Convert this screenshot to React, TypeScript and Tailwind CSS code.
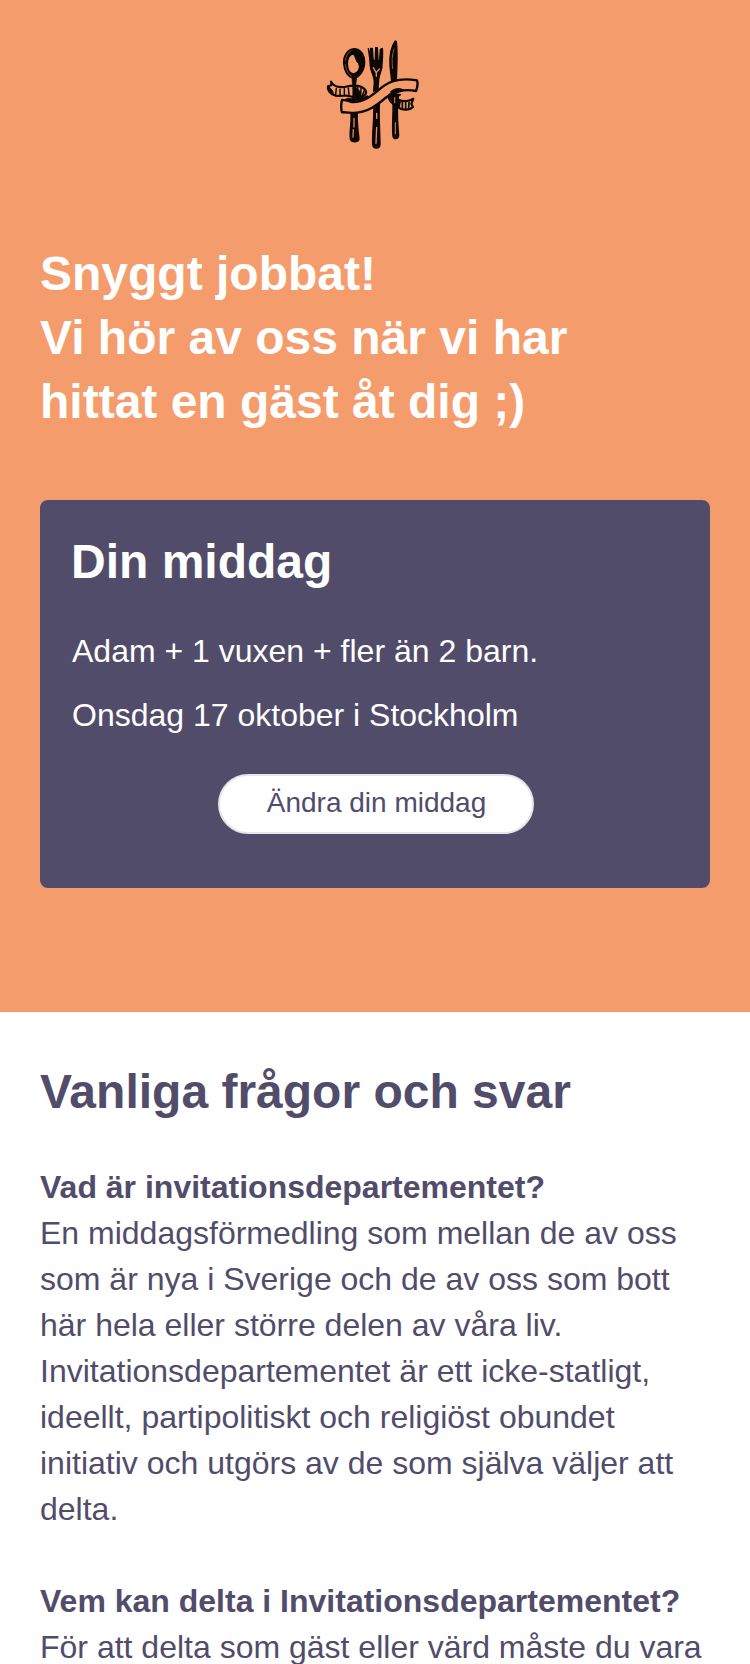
function Logo() {
  return (
    <svg
      className="ml-[270px] block h-[130px] w-[125px] blur-[0.45px]"
      viewBox="0 0 375 390"
      fill="none"
      stroke="#0d0805"
      strokeLinecap="round"
      strokeLinejoin="round"
      role="img"
    >
      {/* ribbon tails behind the cutlery */}
      <path
        d="M63 155 C70 170 84 173 104 171 C128 165 154 164 166 180 C173 190 163 200 148 204 M63 155 C65 164 67 168 54 168 C51 180 60 193 77 197 C95 200 109 194 121 199 C135 203 147 214 158 202"
        strokeWidth="6.5"
      />
      <path d="M79 175 L77 193 M90 178 V195 M103 176 V193 M115 174 L117 193 M143 171 V198 M153 175 L152 199 M162 183 L156 200" strokeWidth="4.5" />
      <path d="M55 169 C66 178 71 185 69 192 L60 184 Z M137 173 C149 178 155 190 148 204 L139 205 Z" fill="#0d0805" strokeWidth="3" />
      <path
        d="M236 190 C232 208 246 223 264 231 C274 241 298 242 309 231 L304 222 L310 206 C299 214 280 216 267 210"
        strokeWidth="6.5"
      />
      <path d="M237 193 C247 191 263 191 273 194 C260 199 261 207 271 215 L268 231 C251 225 240 211 237 193 Z" fill="#0d0805" strokeWidth="3" />
      <path d="M277 217 V234 M287 218 V235 M297 217 L296 234" strokeWidth="5" />
      {/* spoon */}
      <path
        d="M132 56 C112 58 99 78 101 101 C103 124 114 140 129 145 C149 143 164 121 164 97 C164 73 151 56 132 56 Z M132 71 C118 74 112 86 112 102 C113 118 120 131 131 132 C143 129 151 115 151 97 C150 79 144 71 132 71 Z"
        fill="#0d0805"
        fillRule="evenodd"
        strokeWidth="4"
      />
      <path d="M106 91 C108 78 114 68 123 62 M106 103 C109 123 117 134 125 139" stroke="#b87950" strokeWidth="1.8" />
      <path d="M126 70 C139 77 134 91 146 101 C149 111 150 119 145 125 C158 104 155 76 143 69 Z" fill="#0d0805" strokeWidth="3" />
      <path d="M126 143 L140 142 L138 158 C135 177 140 190 146 210 L125 214 C131 193 128 174 126 143 Z" fill="#0d0805" strokeWidth="2" />
      <path d="M123 252 L142 248 C140 277 145 304 147 327 C146 337 125 339 121 327 C118 304 125 278 123 252 Z" fill="#0d0805" strokeWidth="4" />
      <path d="M132 265 V291 M130 299 L129 321" stroke="#d9885b" strokeWidth="4" />
      {/* fork */}
      <path
        d="M175 56 C178 74 180 89 181 107 C181 126 194 137 193 157 L191 184 L204 178 L206 148 C207 129 218 122 216 104 C217 88 219 72 217 55 L211 59 L209 89 C207 96 204 95 204 88 L202 53 L197 53 L196 88 C193 96 190 94 189 84 L187 55 L182 55 L181 79 Z"
        fill="#0d0805"
        strokeWidth="4"
      />
      <path d="M198 127 L190 113 M199 128 L208 117 M199 128 V139" stroke="#e38e5f" strokeWidth="4" />
      <path d="M191 222 L209 212 C205 250 210 306 210 343 C209 358 190 358 188 344 C186 306 194 261 191 222 Z" fill="#0d0805" strokeWidth="4" />
      <path d="M200 250 V265 M200 292 L198 340" stroke="#e38e5f" strokeWidth="4" />
      {/* knife */}
      <path d="M256 33 C244 49 238 77 240 108 L245 153 L259 149 C261 111 263 68 259 35 Z" fill="#0d0805" strokeWidth="4" />
      <path d="M252 57 C246 75 245 95 248 116" stroke="#8c583b" strokeWidth="3" />
      <path d="M248 195 H266 C258 235 264 288 266 318 C264 329 251 328 249 319 C245 286 252 234 248 195 Z" fill="#0d0805" strokeWidth="4" />
      <path d="M256 278 V311 M254 203 V218" stroke="#c47850" strokeWidth="3.5" />
      {/* front ribbon */}
      <path
        d="M96 210 C103 209 112 212 124 216 C162 219 190 193 219 169 C249 146 286 145 321 151 C325 163 322 173 318 183 C281 176 257 184 230 201 C200 226 176 246 132 249 C120 249 108 246 96 247 C92 234 93 222 96 210 Z"
        fill="#f49c6c"
        strokeWidth="7"
      />
      <path d="M105 209 C114 201 128 205 136 213 L122 216 Z M242 185 C255 173 270 174 284 181 C270 180 259 185 248 191 Z" fill="#0d0805" strokeWidth="3" />
      <path d="M236 196 L251 185 M145 212 C154 209 165 203 172 199" strokeWidth="6" />
    </svg>
  );
}

const faq = [
  {
    question: "Vad är invitationsdepartementet?",
    answer: [
      "En middagsförmedling som mellan de av oss",
      "som är nya i Sverige och de av oss som bott",
      "här hela eller större delen av våra liv.",
      "Invitationsdepartementet är ett icke-statligt,",
      "ideellt, partipolitiskt och religiöst obundet",
      "initiativ och utgörs av de som själva väljer att",
      "delta.",
    ],
  },
  {
    question: "Vem kan delta i Invitationsdepartementet?",
    answer: ["För att delta som gäst eller värd måste du vara"],
  },
];

export default function App() {
  return (
    <div className="h-[1664px] w-[750px] overflow-hidden bg-white font-['Liberation_Sans',Arial,sans-serif] text-[32px] leading-[46px] text-[#524c6b]">
      <header className="h-[1012px] bg-[#f49c6c] px-10 pt-[30px] text-white">
        <Logo />
        <h1 className="mt-[82px] text-5xl leading-[64px] font-bold">
          Snyggt jobbat!
          <br />
          Vi hör av oss när vi har
          <br />
          hittat en gäst åt dig ;)
        </h1>
        <section className="mt-[66px] h-[388px] rounded-lg bg-[#524c6b] px-8 pt-[30px]">
          <h2 className="-ml-px text-5xl leading-[64px] font-bold">Din middag</h2>
          <p className="mt-[25px] leading-[64px]">Adam + 1 vuxen + fler än 2 barn.</p>
          <p className="leading-[64px]">Onsdag 17 oktober i Stockholm</p>
          <button className="mt-[27px] ml-[146px] block h-[60px] w-[316px] rounded-full border-2 border-[#e6e4ea] bg-white pb-0.5 pl-px text-[28px] leading-[54px] text-[#524c6b]">
            Ändra din middag
          </button>
        </section>
      </header>
      <main className="px-10 pt-12">
        <h2 className="text-5xl leading-[64px] font-bold">Vanliga frågor och svar</h2>
        <div className="mt-10 flex flex-col gap-[46px]">
          {faq.map((item) => (
            <section key={item.question}>
              <h3 className="font-bold">{item.question}</h3>
              <p>
                {item.answer.map((line) => (
                  <span key={line} className="block whitespace-nowrap">
                    {line}
                  </span>
                ))}
              </p>
            </section>
          ))}
        </div>
      </main>
    </div>
  );
}
